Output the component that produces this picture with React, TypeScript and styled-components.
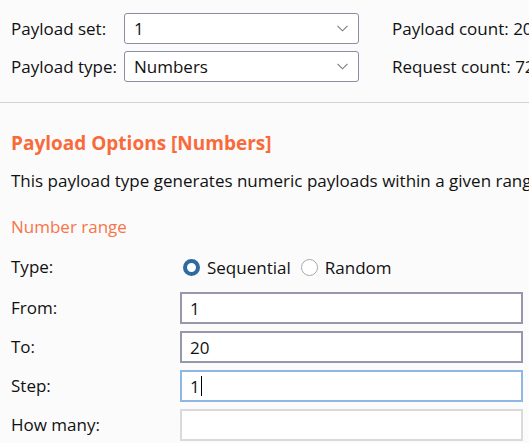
import React from "react";
import styled, { createGlobalStyle } from "styled-components";

const Global = createGlobalStyle`
  html, body { margin: 0; padding: 0; background: #fbfbfb; }
  body { font-family: "Open Sans", "Noto Sans", sans-serif; font-size: 17px; color: #111; overflow: hidden; }
  * { box-sizing: border-box; }
`;

const Page = styled.div`
  width: 529px;
  height: 443px;
  overflow: hidden;
  white-space: nowrap;
`;

const Top = styled.div`
  display: grid;
  grid-template-columns: 113px 235px auto;
  grid-auto-rows: 31px;
  row-gap: 7px;
  align-content: start;
  align-items: center;
  padding: 13px 0 0 11px;
  height: 103px;
  border-bottom: 1px solid #d2d2d2;
`;

const Label = styled.div`
  line-height: 20px;
`;

const Select = styled.div`
  display: flex;
  align-items: center;
  justify-content: space-between;
  height: 31px;
  border: 1px solid #8e8ca3;
  border-radius: 3px;
  background: #fff;
  padding: 0 10px 0 9px;
`;

const Count = styled.div`
  padding-left: 33px;
  line-height: 20px;
`;

const Options = styled.div`
  padding: 28px 0 0 11px;
`;

const Heading = styled.div`
  font-weight: 700;
  font-size: 19px;
  color: #f96a3b;
  line-height: 24px;
`;

const Desc = styled.div`
  margin-top: 16px;
  line-height: 20px;
`;

const SubHeading = styled.div`
  margin-top: 26px;
  color: #f7744a;
  line-height: 20px;
`;

const Form = styled.div`
  display: grid;
  grid-template-columns: 169px 343px;
  grid-template-rows: 33px;
  grid-auto-rows: 32px;
  row-gap: 7px;
  margin-top: 15px;
  align-items: center;
`;

const TypeLabel = styled(Label)`
  align-self: start;
  padding-top: 5px;
`;

const RadioGroup = styled.div`
  display: flex;
  align-items: center;
  height: 33px;
  padding: 0 0 3px 3px;
`;

const RadioItem = styled.label`
  display: flex;
  align-items: center;
  gap: 7px;
  margin-right: 10px;
`;

const RadioDot = styled.span<{ $on?: boolean }>`
  width: 17px;
  height: 17px;
  border-radius: 50%;
  background: #fff;
  border: ${(p) => (p.$on ? "4px solid #2f6aa0" : "1px solid #a9a9a9")};
`;

const Field = styled.div<{ $state?: "normal" | "focus" | "disabled" }>`
  display: flex;
  align-items: center;
  height: 32px;
  background: #fff;
  border: ${(p) =>
    p.$state === "focus"
      ? "2px solid #8fb7e6"
      : p.$state === "disabled"
      ? "2px solid #dadada"
      : "2px solid #9896ab"};
  padding-left: 8px;
`;

const Caret = styled.span`
  display: inline-block;
  width: 1px;
  height: 20px;
  background: #000;
  margin-left: 1px;
`;

const Chevron = () => (
  <svg width="11" height="7" viewBox="0 0 11 7">
    <path d="M0.5 0.8 L5.5 5.8 L10.5 0.8" fill="none" stroke="#7a7a7a" strokeWidth="1.1" />
  </svg>
);

export default function App() {
  return (
    <Page>
      <Global />
      <Top>
        <Label>Payload set:</Label>
        <Select>
          <span>1</span>
          <Chevron />
        </Select>
        <Count>Payload count: 20</Count>
        <Label>Payload type:</Label>
        <Select>
          <span>Numbers</span>
          <Chevron />
        </Select>
        <Count>Request count: 720</Count>
      </Top>
      <Options>
        <Heading>Payload Options [Numbers]</Heading>
        <Desc>This payload type generates numeric payloads within a given range and format.</Desc>
        <SubHeading>Number range</SubHeading>
        <Form>
          <TypeLabel>Type:</TypeLabel>
          <RadioGroup>
            <RadioItem>
              <RadioDot $on />
              Sequential
            </RadioItem>
            <RadioItem>
              <RadioDot />
              Random
            </RadioItem>
          </RadioGroup>
          <Label>From:</Label>
          <Field>1</Field>
          <Label>To:</Label>
          <Field>20</Field>
          <Label>Step:</Label>
          <Field $state="focus">
            1<Caret />
          </Field>
          <Label>How many:</Label>
          <Field $state="disabled" />
        </Form>
      </Options>
    </Page>
  );
}
